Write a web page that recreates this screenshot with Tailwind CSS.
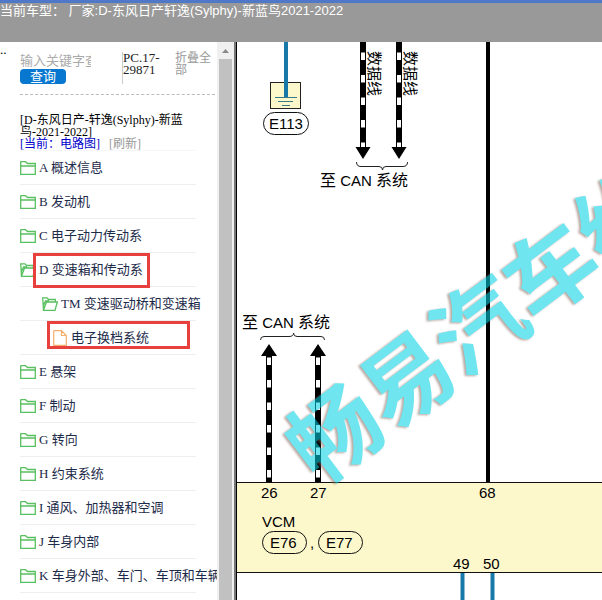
<!DOCTYPE html>
<html lang="zh-CN">
<head>
  <meta charset="UTF-8">
  <meta name="viewport" content="width=device-width, initial-scale=1.0">
  <title>电路图</title>
  <script src="https://cdn.jsdelivr.net/npm/@tailwindcss/browser@4"></script>
</head>
<body class="flex h-screen flex-col overflow-hidden bg-white font-['Liberation_Serif','Noto_Sans_CJK_SC',serif] text-[13px] leading-3">
  <!-- Icon sprites -->
  <svg class="hidden">
    <symbol id="folder" viewBox="0 0 16 14">
      <path d="M.7 13.300V1.200Q.7 .7 1.200 .7H5.500L7.500 2.500H15.300V13.300ZM.7 5H15.300" fill="none" stroke="#58c060" stroke-width="1.300"/>
    </symbol>
    <symbol id="folder-open" viewBox="0 0 16 14">
      <path d="M1.500 13.300L.7 .8H5L6.500 2.500H13.300V5M1.500 13.300L4.500 5H15.300L13 13.300ZM1.300 9L3.500 3.800H7" fill="none" stroke="#58c060" stroke-width="1.300"/>
    </symbol>
    <symbol id="file" viewBox="0 0 14 16">
      <path d="M.7 1.200Q.7 .7 1.200 .7H8.500L13.300 5.500V15.300H.7ZM8.500 .7V5.500H13.300" fill="none" stroke="#f5ae6c" stroke-width="1.200"/>
    </symbol>
  </svg>

  <!-- Header -->
  <header class="h-[42px] shrink-0 border-t-3 border-[#5078c8] bg-[#999] font-['Liberation_Sans','Noto_Sans_CJK_SC',sans-serif] text-white">
    <h1 class="truncate leading-4">当前车型： 厂家:D-东风日产轩逸(Sylphy)-新蓝鸟2021-2022</h1>
  </header>

  <div class="flex min-h-0 flex-1">
    <!-- Sidebar -->
    <aside class="flex w-[237px] shrink-0 border-r border-black">
      <span class="w-5 shrink-0 pt-0.5">..</span>
      <div class="min-w-0 flex-1 overflow-hidden">
        <form class="mr-0.5 flex border-b border-dashed border-[#bbb] py-2.5">
          <div class="w-[102px] shrink-0">
            <input type="text" aria-label="关键字" placeholder="输入关键字查询" class="block h-[17px] w-[71px] text-[13px] placeholder:text-[#aaa] focus:outline-none">
            <button type="button" class="block h-[15px] w-[46px] rounded bg-[#0877d0] text-white">查询</button>
          </div>
          <div class="w-[53px] shrink-0 border-l border-[#ccc] text-[#222]">PC.17-29871</div>
          <button type="button" class="w-10 self-start text-left text-[12px] text-[#999]">折叠全部</button>
        </form>

        <div class="w-[176px] border-b border-[#f6f6f6] pt-[19px] text-[12px]">
          <h2>[D-东风日产-轩逸(Sylphy)-新蓝鸟-2021-2022]</h2>
          <p><a href="#" class="text-[#00c]">[当前：电路图]</a> <a href="#" class="ml-1.5 text-[#999]">[刷新]</a></p>
        </div>

        <ul class="w-[176px] whitespace-nowrap text-[#1d2b4a]">
          <li class="h-[34px] border-b border-[#eee]"><a href="#" class="flex h-full items-center gap-[3px]"><svg class="h-3.5 w-4 shrink-0"><use href="#folder"/></svg>A 概述信息</a></li>
          <li class="h-[34px] border-b border-[#eee]"><a href="#" class="flex h-full items-center gap-[3px]"><svg class="h-3.5 w-4 shrink-0"><use href="#folder"/></svg>B 发动机</a></li>
          <li class="h-[34px] border-b border-[#eee]"><a href="#" class="flex h-full items-center gap-[3px]"><svg class="h-3.5 w-4 shrink-0"><use href="#folder"/></svg>C 电子动力传动系</a></li>
          <li class="relative h-[34px] border-b border-[#eee]">
            <a href="#" class="flex h-full items-center gap-[3px]"><svg class="h-3.5 w-4 shrink-0"><use href="#folder-open"/></svg>D 变速箱和传动系</a>
            <span class="absolute top-0 left-[13px] h-[35px] w-[117px] border-3 border-[#e8403c]"></span>
          </li>
          <li class="h-[34px] border-b border-[#eee] pl-[22px]"><a href="#" class="flex h-full items-center gap-[3px]"><svg class="h-3.5 w-4 shrink-0"><use href="#folder-open"/></svg>TM 变速驱动桥和变速箱</a></li>
          <li class="relative h-[34px] border-b border-[#eee] pl-[33px]">
            <a href="#" class="flex h-full items-center gap-1"><svg class="h-4 w-3.5 shrink-0"><use href="#file"/></svg>电子换档系统</a>
            <span class="absolute top-0 left-[27px] h-7 w-[143px] border-3 border-[#e8403c]"></span>
          </li>
          <li class="h-[34px] border-b border-[#eee]"><a href="#" class="flex h-full items-center gap-[3px]"><svg class="h-3.5 w-4 shrink-0"><use href="#folder"/></svg>E 悬架</a></li>
          <li class="h-[34px] border-b border-[#eee]"><a href="#" class="flex h-full items-center gap-[3px]"><svg class="h-3.5 w-4 shrink-0"><use href="#folder"/></svg>F 制动</a></li>
          <li class="h-[34px] border-b border-[#eee]"><a href="#" class="flex h-full items-center gap-[3px]"><svg class="h-3.5 w-4 shrink-0"><use href="#folder"/></svg>G 转向</a></li>
          <li class="h-[34px] border-b border-[#eee]"><a href="#" class="flex h-full items-center gap-[3px]"><svg class="h-3.5 w-4 shrink-0"><use href="#folder"/></svg>H 约束系统</a></li>
          <li class="h-[34px] border-b border-[#eee]"><a href="#" class="flex h-full items-center gap-[3px]"><svg class="h-3.5 w-4 shrink-0"><use href="#folder"/></svg>I 通风、加热器和空调</a></li>
          <li class="h-[34px] border-b border-[#eee]"><a href="#" class="flex h-full items-center gap-[3px]"><svg class="h-3.5 w-4 shrink-0"><use href="#folder"/></svg>J 车身内部</a></li>
          <li class="h-[34px] border-b border-[#eee]"><a href="#" class="flex h-full items-center gap-[3px]"><svg class="h-3.5 w-4 shrink-0"><use href="#folder"/></svg>K 车身外部、车门、车顶和车辆</a></li>
        </ul>
      </div>
      <!-- Scrollbar -->
      <div class="flex w-[17px] shrink-0 flex-col bg-[#f0f0f0] px-0.5">
        <svg class="h-[17px] w-[13px]" viewBox="0 0 13 17"><path d="M3 11L6.500 7L10 11Z" fill="#888"/></svg>
        <div class="flex-1 bg-[#c1c1c1]"></div>
      </div>
      <div class="w-0.5 shrink-0 bg-[#777]"></div>
    </aside>

    <!-- Circuit diagram -->
    <main class="min-w-0 flex-1">
      <svg class="h-full w-full font-['Liberation_Sans','Noto_Sans_CJK_SC',sans-serif] text-[15px]" viewBox="0 0 365 558" preserveAspectRatio="xMinYMin slice">
        <!-- Ground E113 -->
        <rect x="33.500" y="40.500" width="30" height="26" fill="#fdf8cc" stroke="#222"/>
        <path d="M49 0V55" stroke="#1878a8" stroke-width="4"/>
        <path d="M38 55.500H60M41 59.500H56M45 63.500H53" stroke="#3a7a88"/>
        <rect x="26.500" y="70.500" width="45" height="22" rx="11" fill="none" stroke="#111"/>
        <text x="49" y="87" text-anchor="middle">E113</text>

        <!-- CAN lines, top -->
        <path d="M126 0V106M162 0V106" stroke="#000" stroke-width="6"/>
        <path d="M126 10.500V106M162 10.500V106" stroke="#fff" stroke-width="4" stroke-dasharray="7.500 15"/>
        <path d="M118.500 105H133.500L126 117ZM154.500 105H169.500L162 117Z"/>
        <text transform="translate(132 9) rotate(90)">数据线</text>
        <text transform="translate(168 9) rotate(90)">数据线</text>
        <path d="M119.500 120Q119.500 124.500 124 124.500H142Q145.500 124.500 145.500 128Q145.500 124.500 149 124.500H166Q170.500 124.500 170.500 120" fill="none" stroke="#222"/>
        <text x="83" y="144"><tspan class="text-base">至</tspan> CAN <tspan class="text-base">系统</tspan></text>

        <!-- VCM -->
        <rect x="-1" y="440.500" width="4000" height="90" fill="#fdf8cc" stroke="#111"/>
        <path d="M251 0V440" stroke="#000" stroke-width="4"/>
        <path d="M225.500 531V800M255.500 531V800" stroke="#1878a8" stroke-width="4"/>
        <text x="24" y="456">26</text>
        <text x="73" y="456">27</text>
        <text x="242" y="456">68</text>
        <text x="216" y="527">49</text>
        <text x="246" y="527">50</text>
        <text x="25" y="485">VCM</text>
        <rect x="25.500" y="489.500" width="44" height="22" rx="11" fill="none" stroke="#111"/>
        <text x="33" y="506">E76</text>
        <text x="73" y="506">,</text>
        <rect x="81.500" y="489.500" width="44" height="22" rx="11" fill="none" stroke="#111"/>
        <text x="89" y="506">E77</text>

        <!-- CAN lines, bottom -->
        <text x="5" y="286"><tspan class="text-base">至</tspan> CAN <tspan class="text-base">系统</tspan></text>
        <path d="M23.500 298Q23.500 294.500 27 294.500H52Q56.500 294.500 56.500 291Q56.500 294.500 60 294.500H84Q87.500 294.500 87.500 298" fill="none" stroke="#222"/>
        <path d="M32 312V440M81 312V440" stroke="#000" stroke-width="6"/>
        <path d="M32 315.500V440M81 315.500V440" stroke="#fff" stroke-width="4" stroke-dasharray="7.500 15"/>
        <path d="M24 314H40L32 302ZM73 314H89L81 302Z"/>

        <!-- Watermark -->
        <g opacity=".56" class="drop-shadow-[-2px_1px_1px_#806458]">
          <text class="text-[90px] font-bold" transform="translate(82 445) rotate(-37)" fill="#00d2e6">畅易汽车维修</text>
        </g>
      </svg>
    </main>
  </div>
</body>
</html>
